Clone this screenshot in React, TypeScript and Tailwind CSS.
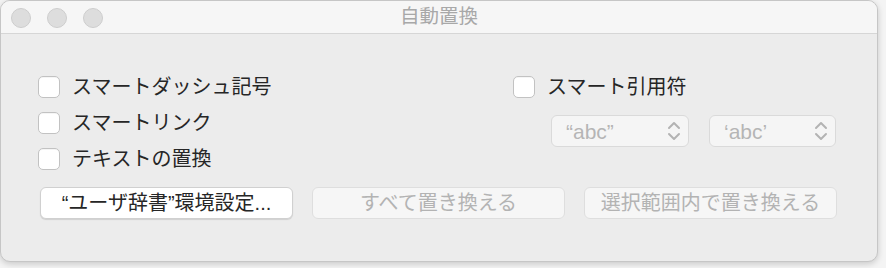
const font = { fontFamily: '"Liberation Sans", "Noto Sans CJK JP", sans-serif' }

function Check({ label }: { label: string }) {
  return (
    <label className="flex items-center h-[36px] gap-[12px]">
      <span className="w-[22px] h-[22px] rounded-[5px] bg-white border border-[#c2c2c2] shadow-[inset_0_1px_0_rgba(0,0,0,0.04)]" />
      <span className="text-[20px] text-[#262626] leading-none">{label}</span>
    </label>
  )
}

function Chevrons() {
  return (
    <svg width="14" height="22" viewBox="0 0 14 22" fill="none" stroke="#b3b3b3" strokeWidth="2" strokeLinecap="round" strokeLinejoin="round">
      <path d="M2 8 L7 3 L12 8" />
      <path d="M2 14 L7 19 L12 14" />
    </svg>
  )
}

function Popup({ text, width }: { text: string; width: string }) {
  return (
    <div className={`${width} h-[32px] rounded-[6px] bg-[#f5f5f5] border border-[#dadada] flex items-center justify-between pl-[14px] pr-[7px]`}>
      <span className="text-[21px] text-[#b5b5b5] leading-none">{text}</span>
      <Chevrons />
    </div>
  )
}

function Btn({ label, disabled }: { label: string; disabled?: boolean }) {
  return (
    <button
      className={`w-[253px] h-[32px] rounded-[6px] flex items-center justify-center text-[20px] leading-none ${
        disabled
          ? 'bg-[#f6f6f6] text-[#b3b3b3] border border-[#dedede]'
          : 'bg-white text-[#262626] border border-[#d0d0d0] shadow-[0_1px_1px_rgba(0,0,0,0.12)]'
      }`}
    >
      {label}
    </button>
  )
}

export default function App() {
  return (
    <div className="w-[886px] h-[268px] bg-[#f4f4f4]" style={font}>
      <div className="w-[878px] h-[262px] bg-[#ececec] rounded-[10px] border border-[#c6c6c6] shadow-[0_2px_6px_rgba(0,0,0,0.18)] overflow-hidden flex flex-col">
        {/* title bar */}
        <div className="h-[33px] shrink-0 bg-[#f6f6f6] border-b border-[#d6d6d6] flex items-center relative">
          <div className="flex gap-[16px] pl-[10px] pt-[2px]">
            <span className="w-[20px] h-[20px] rounded-full bg-[#dddddd] border border-[#cdcdcd]" />
            <span className="w-[20px] h-[20px] rounded-full bg-[#dddddd] border border-[#cdcdcd]" />
            <span className="w-[20px] h-[20px] rounded-full bg-[#dddddd] border border-[#cdcdcd]" />
          </div>
          <div className="absolute inset-0 flex items-center justify-center text-[19.5px] text-[#a8a8a8] pointer-events-none">
            自動置換
          </div>
        </div>

        {/* content */}
        <div className="pt-[35px] pl-[37px]">
          <div className="flex">
            <div className="w-[475px] flex flex-col">
              <Check label="スマートダッシュ記号" />
              <Check label="スマートリンク" />
              <Check label="テキストの置換" />
            </div>
            <div className="flex flex-col">
              <Check label="スマート引用符" />
              <div className="flex gap-[20px] mt-[10px] pl-[38px]">
                <Popup text="“abc”" width="w-[138px]" />
                <Popup text="‘abc’" width="w-[127px]" />
              </div>
            </div>
          </div>
          <div className="flex gap-[19px] mt-[10px] pl-[2px]">
            <Btn label="“ユーザ辞書”環境設定..." />
            <Btn label="すべて置き換える" disabled />
            <Btn label="選択範囲内で置き換える" disabled />
          </div>
        </div>
      </div>
    </div>
  )
}
